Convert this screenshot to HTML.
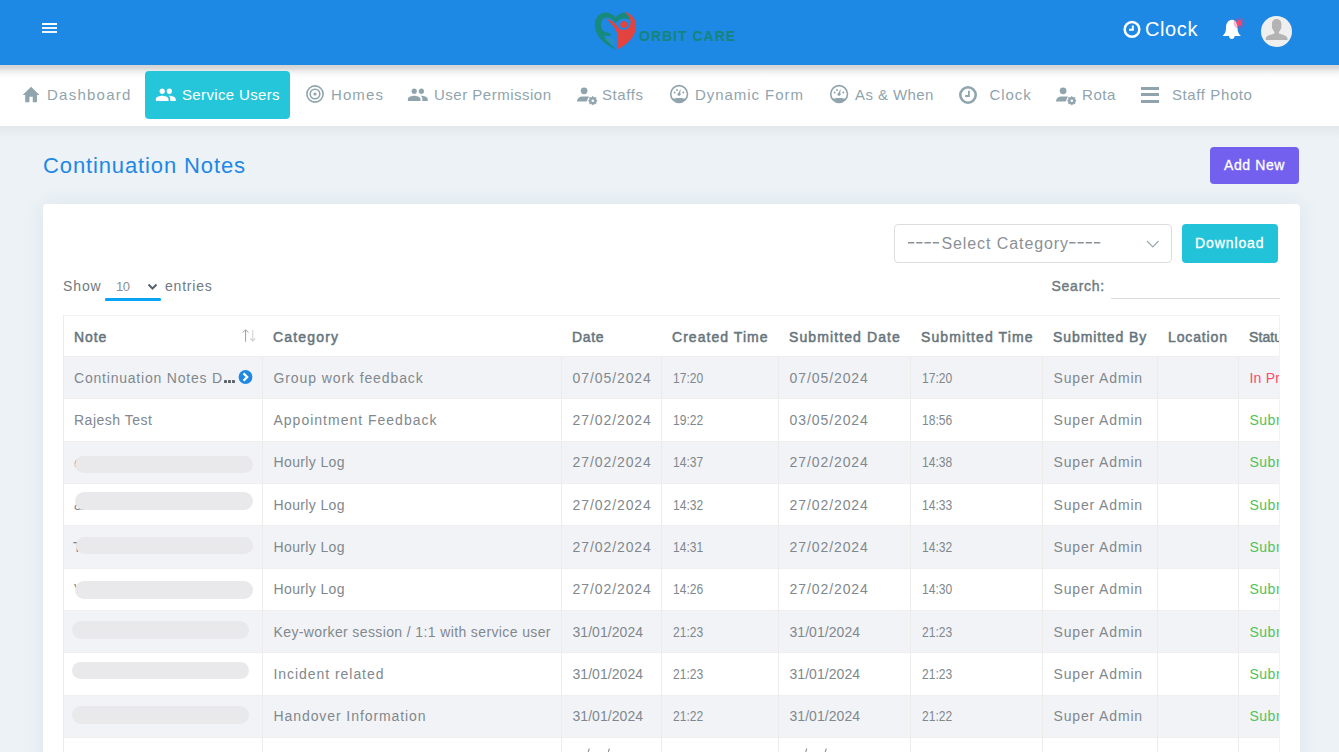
<!DOCTYPE html>
<html><head><meta charset="utf-8">
<style>
*{box-sizing:border-box;margin:0;padding:0}
html,body{width:1339px;height:752px;overflow:hidden}
body{font-family:"Liberation Sans",sans-serif;background:#ecf2f6;position:relative;color:#7d868c}
.abs{position:absolute}
#hdr{position:absolute;left:0;top:0;width:1339px;height:65px;background:#1e88e5;z-index:3}
#nav{position:absolute;left:0;top:65px;width:1339px;height:61px;background:#fff;z-index:2}
#navshadow{position:absolute;left:0;top:65px;width:1339px;height:10px;background:linear-gradient(#d9d9d9,rgba(255,255,255,0));z-index:2}
#bgshadow{position:absolute;left:0;top:126px;width:1339px;height:12px;background:linear-gradient(#e2e7eb,#ecf2f6);}
.nt{position:absolute;top:20px;font-size:15px;line-height:20px;color:#90a4ae;white-space:nowrap}
.ni{position:absolute}
#title{position:absolute;left:43px;top:152px;font-size:22px;line-height:28px;color:#1e88e5;letter-spacing:0.88px;white-space:nowrap}
#addnew{position:absolute;left:1210px;top:147px;width:89px;height:37px;background:#7460ee;border-radius:4px;color:#fff;font-size:14px;line-height:37px;letter-spacing:0.6px;-webkit-text-stroke:0.3px #fff;padding-left:14px;white-space:nowrap}
#sel{position:absolute;left:851px;top:20px;width:278px;height:39px;border:1px solid #dadde0;border-radius:4px;color:#8a9197;font-size:16px;line-height:37px;padding-left:12px;white-space:nowrap}
#dl{position:absolute;left:1139px;top:20px;width:96px;height:39px;background:#22c3d8;border-radius:4px;color:#fff;font-size:14px;font-weight:400;-webkit-text-stroke:0.3px #fff;line-height:39px;padding-left:13px;letter-spacing:0.9px;white-space:nowrap}
.lbl{position:absolute;font-size:14px;line-height:18px;color:#6f7a80;white-space:nowrap}
#tw{position:absolute;left:20px;top:111px;width:1216px;height:600px;overflow:hidden}
table{border-collapse:collapse;table-layout:fixed;width:1380px}
th{height:41px;text-align:left;font-weight:400;-webkit-text-stroke:0.5px #67757c;font-size:14px;color:#67757c;padding:1px 0 0 11px;border-top:1px solid #f2f2f2;white-space:nowrap;overflow:hidden}
td{height:42.35px;font-size:14px;color:#80888e;padding:0 0 0 11px;border-left:1px solid #eeebeb;border-top:1px solid #f1eeee;white-space:nowrap;overflow:hidden;position:relative}
tr.s td{background:#f2f3f7}
.tm span{display:inline-block;transform:scaleX(0.86);transform-origin:0 50%;letter-spacing:0}
.dt{letter-spacing:0.92px}
.sa{letter-spacing:0.85px}
.pill{position:absolute;height:17.5px;border-radius:9px;background:#e9e9eb}

#card{position:absolute;left:43px;top:204px;width:1257px;height:600px;background:#fff;border-radius:4px;box-shadow:0 0 18px rgba(170,185,200,.22)}
</style></head><body>
<div id="hdr">
<div class="abs" style="left:42px;top:23px;width:15px;height:2px;background:#fff"></div>
<div class="abs" style="left:42px;top:27px;width:15px;height:2px;background:#eef6fd"></div>
<div class="abs" style="left:42px;top:31px;width:15px;height:2px;background:#eef6fd"></div>
<svg class="abs" style="left:585px;top:5px" width="60" height="50" viewBox="0 0 60 50">
 <path d="M31,44.5 C22,41 11,33 10,22 C9,13 14,7.5 20.5,7.5 C25,7.5 28.5,10 30.5,12.5 C33,9 36.5,7.5 40,7.5 C42,8 44,11 45,15 C42,13 37,12.5 33.5,15.5 L30.5,18 C28,14 24,12.5 21,12.8 C17,13.2 15.5,17 16,21 C16.5,25 19,27 22,27.5 C24,27.8 26,28.5 26,30 C24,31.5 21,31 19,30.5 C21,35 26,40 31,44.5 Z" fill="#178a7d"/>
 <path d="M20.5,34 L29,39.5 M22.5,32.5 L29.5,36.5" fill="none" stroke="#3e9a8a" stroke-width="1"/>
 <path d="M39.5,7 C46,8 51.5,14 51,22 C50.5,32 42,40 32,44.5 C33,39 33.5,33 32.5,29 C30.5,23 26,17.5 21,14.2 C26,14.5 30,17.5 33,22 C35,25 38,25.5 41,24.5 C44,23 46,20 45.5,16 C45,12 43,9 39.5,7 Z" fill="#e2433f"/>
 <circle cx="38.75" cy="19.5" r="3.5" fill="#e2433f"/>
</svg>
<div class="abs" style="left:639px;top:28px;font-size:14px;line-height:16px;font-weight:700;color:#158579;letter-spacing:1px;white-space:nowrap">ORBIT CARE</div>
<svg class="abs" style="left:1122px;top:19px" width="20" height="20" viewBox="0 0 20 20">
 <circle cx="10" cy="10.4" r="7.3" fill="none" stroke="#fff" stroke-width="2.5"/>
 <path d="M10.8,6.4 V10.8 H7" fill="none" stroke="#fff" stroke-width="2"/>
</svg>
<div class="abs" style="left:1145px;top:18px;font-size:20px;line-height:23px;color:#fff;letter-spacing:0.6px;white-space:nowrap">Clock</div>
<svg class="abs" style="left:1220px;top:14px" width="30" height="30" viewBox="0 0 30 30">
 <path d="M12,5.7 C8,6 6,9.5 6,13 C6,17 5.5,19 2.5,22 H21 C18,19 17.5,17 17.5,13 C17.5,9.5 16,6 12,5.7 Z" fill="#fff"/>
 <path d="M9,22 C9,24 10.3,25 11.8,25 C13.3,25 14.6,24 14.6,22 Z" fill="#fff"/>
 <circle cx="19.2" cy="9" r="4.6" fill="none" stroke="rgba(225,60,130,.38)" stroke-width="2"/>
 <circle cx="19.2" cy="9" r="2.9" fill="#f6456a"/>
</svg>
<div class="abs" style="left:1261px;top:16px;width:31px;height:31px;border-radius:50%;background:#efefef;overflow:hidden">
 <svg width="31" height="31" viewBox="0 0 31 31" style="display:block">
  <path d="M15.6,3 C12.5,3 10.9,5.3 10.9,8.5 C10.9,10 11.2,11 11,11.3 C10.5,11.8 11.3,12.5 11.6,13 C12.2,14.5 13,15.5 13.5,16 L13.3,17.5 C11,18.5 6.5,19 5,21.5 L4.6,24 H26.6 L26.3,21.5 C25,19 20.5,18.5 18,17.5 L17.8,16 C18.3,15.5 19.1,14.5 19.7,13 C20,12.5 20.8,11.8 20.3,11.3 C20.1,11 20.4,10 20.4,8.5 C20.4,5.3 18.8,3 15.6,3 Z" fill="#b3b3b3"/>
 </svg>
</div>
</div>
<div id="nav">
<div class="abs" style="left:0;top:0;width:1339px;height:14px;background:linear-gradient(rgba(0,0,0,.17) 0px,rgba(0,0,0,.15) 3px,rgba(0,0,0,.075) 6px,rgba(0,0,0,.027) 9px,rgba(0,0,0,.008) 12px,rgba(0,0,0,0) 14px)"></div>
<svg class="abs" style="left:20.5px;top:18.6px" width="20" height="20" viewBox="0 0 20 20"><g transform="scale(0.84,0.91)"><path d="M10 20v-6h4v6h5v-8h3L12 3 2 12h3v8z" fill="#90a4ae"/></g></svg>
<div class="nt" style="left:47px;letter-spacing:1.25px">Dashboard</div>
<div class="abs" style="left:145px;top:6px;width:145px;height:48px;background:#26c6da;border-radius:4px"></div>
<svg class="abs" style="left:155.1px;top:18.9px" width="22" height="20" viewBox="0 0 22 20"><g transform="scale(0.9)"><path d="M16 11c1.66 0 2.99-1.34 2.99-3S17.66 5 16 5c-1.66 0-3 1.34-3 3s1.34 3 3 3zm-8 0c1.66 0 2.99-1.34 2.99-3S9.66 5 8 5C6.34 5 5 6.34 5 8s1.34 3 3 3zm0 2c-2.33 0-7 1.17-7 3.5V19h14v-2.5c0-2.33-4.67-3.5-7-3.5zm8 0c-.29 0-.62.02-.97.05 1.16.84 1.97 1.97 1.97 3.45V19h6v-2.5c0-2.33-4.67-3.5-7-3.5z" fill="#fff"/></g></svg>
<div class="nt" style="left:182px;color:#fff;letter-spacing:0.35px">Service Users</div>
<svg class="abs" style="left:304.7px;top:19.3px" width="20" height="20" viewBox="0 0 20 20">
<circle cx="10" cy="10" r="8.1" fill="none" stroke="#90a4ae" stroke-width="1.6"/>
<circle cx="10" cy="10" r="4.8" fill="none" stroke="#90a4ae" stroke-width="1.6"/>
<circle cx="10" cy="10" r="1.6" fill="#90a4ae"/>
</svg>
<div class="nt" style="left:331px;letter-spacing:1.1px">Homes</div>
<svg class="abs" style="left:407.1px;top:18.9px" width="22" height="20" viewBox="0 0 22 20"><g transform="scale(0.9)"><path d="M16 11c1.66 0 2.99-1.34 2.99-3S17.66 5 16 5c-1.66 0-3 1.34-3 3s1.34 3 3 3zm-8 0c1.66 0 2.99-1.34 2.99-3S9.66 5 8 5C6.34 5 5 6.34 5 8s1.34 3 3 3zm0 2c-2.33 0-7 1.17-7 3.5V19h14v-2.5c0-2.33-4.67-3.5-7-3.5zm8 0c-.29 0-.62.02-.97.05 1.16.84 1.97 1.97 1.97 3.45V19h6v-2.5c0-2.33-4.67-3.5-7-3.5z" fill="#90a4ae"/></g></svg>
<div class="nt" style="left:434px;letter-spacing:0.5px">User Permission</div>
<svg class="abs" style="left:574.7px;top:19px" width="26" height="24" viewBox="0 0 26 24">
<circle cx="9.1" cy="6.8" r="3.4" fill="#90a4ae"/>
<path d="M2,17.6 C2,14.2 4.5,12.4 8,12.4 H14 L11.6,17.6 Z" fill="#90a4ae"/>
<path d="M22.20,16.70 L20.76,17.92 L20.91,19.81 L19.02,19.66 L17.80,21.10 L16.58,19.66 L14.69,19.81 L14.84,17.92 L13.40,16.70 L14.84,15.48 L14.69,13.59 L16.58,13.74 L17.80,12.30 L19.02,13.74 L20.91,13.59 L20.76,15.48Z" fill="#90a4ae" stroke="#90a4ae" stroke-width="0.8" stroke-linejoin="round"/><circle cx="17.8" cy="16.7" r="1.3" fill="#fff"/>
</svg>
<div class="nt" style="left:602px;letter-spacing:0.6px">Staffs</div>
<svg class="abs" style="left:668.3px;top:18.3px" width="22" height="22" viewBox="0 0 22 22">
<circle cx="11.1" cy="11" r="8.4" fill="none" stroke="#90a4ae" stroke-width="1.6"/>
<path d="M4.6,16 C6.3,15.2 8.6,14.9 11.1,14.9 C13.6,14.9 15.9,15.2 17.6,16 A8.4,8.4 0 0 1 4.6,16 Z" fill="#90a4ae"/>
<path d="M10,11.2 L12.6,5.6 L12.2,11.6 A1.2,1.2 0 0 1 10,11.2Z" fill="#90a4ae"/>
<circle cx="11" cy="11.3" r="1.5" fill="#90a4ae"/>
<circle cx="6.6" cy="9.6" r="1" fill="#90a4ae"/>
<circle cx="9" cy="6.9" r="1" fill="#90a4ae"/>
<circle cx="15.3" cy="9.5" r="1" fill="#90a4ae"/>
</svg>
<div class="nt" style="left:695px;letter-spacing:0.95px">Dynamic Form</div>
<svg class="abs" style="left:828.1px;top:18.3px" width="22" height="22" viewBox="0 0 22 22">
<circle cx="11.1" cy="11" r="8.4" fill="none" stroke="#90a4ae" stroke-width="1.6"/>
<path d="M4.6,16 C6.3,15.2 8.6,14.9 11.1,14.9 C13.6,14.9 15.9,15.2 17.6,16 A8.4,8.4 0 0 1 4.6,16 Z" fill="#90a4ae"/>
<path d="M10,11.2 L12.6,5.6 L12.2,11.6 A1.2,1.2 0 0 1 10,11.2Z" fill="#90a4ae"/>
<circle cx="11" cy="11.3" r="1.5" fill="#90a4ae"/>
<circle cx="6.6" cy="9.6" r="1" fill="#90a4ae"/>
<circle cx="9" cy="6.9" r="1" fill="#90a4ae"/>
<circle cx="15.3" cy="9.5" r="1" fill="#90a4ae"/>
</svg>
<div class="nt" style="left:855px;letter-spacing:0.41px">As &amp; When</div>
<svg class="abs" style="left:957px;top:18.6px" width="22" height="22" viewBox="0 0 22 22">
<circle cx="11" cy="11" r="7.7" fill="none" stroke="#90a4ae" stroke-width="2.6"/>
<path d="M11.9,6.8 V12 H8.2" fill="none" stroke="#90a4ae" stroke-width="1.8"/>
</svg>
<div class="nt" style="left:989.5px;letter-spacing:0.95px">Clock</div>
<svg class="abs" style="left:1053.9px;top:19px" width="26" height="24" viewBox="0 0 26 24">
<circle cx="9.1" cy="6.8" r="3.4" fill="#90a4ae"/>
<path d="M2,17.6 C2,14.2 4.5,12.4 8,12.4 H14 L11.6,17.6 Z" fill="#90a4ae"/>
<path d="M22.20,16.70 L20.76,17.92 L20.91,19.81 L19.02,19.66 L17.80,21.10 L16.58,19.66 L14.69,19.81 L14.84,17.92 L13.40,16.70 L14.84,15.48 L14.69,13.59 L16.58,13.74 L17.80,12.30 L19.02,13.74 L20.91,13.59 L20.76,15.48Z" fill="#90a4ae" stroke="#90a4ae" stroke-width="0.8" stroke-linejoin="round"/><circle cx="17.8" cy="16.7" r="1.3" fill="#fff"/>
</svg>
<div class="nt" style="left:1082px;letter-spacing:0.57px">Rota</div>
<div class="abs" style="left:1141px;top:22.3px;width:18px;height:3px;background:#90a4ae"></div>
<div class="abs" style="left:1141px;top:28.3px;width:18px;height:3px;background:#90a4ae"></div>
<div class="abs" style="left:1141px;top:34.6px;width:18px;height:3px;background:#90a4ae"></div>
<div class="nt" style="left:1172px;letter-spacing:0.6px">Staff Photo</div>
</div>
<div id="bgshadow"></div>
<div id="title">Continuation Notes</div>
<div id="addnew">Add New</div>
<div id="card">
<div id="sel"><span class="abs" style="left:46.4px;top:0;letter-spacing:0.92px">Select Category</span>
<svg class="abs" style="left:13.4px;top:17.2px" width="200" height="2" viewBox="0 0 200 2" fill="#8a9196"><rect x="0.00" y="0" width="6.3" height="1.5"/><rect x="8.25" y="0" width="6.3" height="1.5"/><rect x="16.50" y="0" width="6.3" height="1.5"/><rect x="24.75" y="0" width="6.3" height="1.5"/><rect x="161.20" y="0" width="6.3" height="1.5"/><rect x="169.45" y="0" width="6.3" height="1.5"/><rect x="177.70" y="0" width="6.3" height="1.5"/><rect x="185.95" y="0" width="6.3" height="1.5"/></svg>
<svg class="abs" style="left:251px;top:15px" width="14" height="9" viewBox="0 0 14 9"><path d="M1,1 L6.8,7 L12.6,1" fill="none" stroke="#9aa6ad" stroke-width="1.1"/></svg></div>
<div id="dl">Download</div>
<div class="lbl" style="left:20px;top:73px;letter-spacing:0.9px">Show</div>
<div class="abs" style="left:73px;top:75.5px;font-size:13px;line-height:14px;color:#8a9197;letter-spacing:-0.4px">10</div>
<svg class="abs" style="left:104px;top:79px" width="12" height="9" viewBox="0 0 12 9"><path d="M1.5,1.5 L5.5,5.5 L9.5,1.5" fill="none" stroke="#56626a" stroke-width="2"/></svg>
<div class="abs" style="left:62px;top:94px;width:56px;height:2.6px;border-radius:1.3px;background:#09a3f6"></div>
<div class="lbl" style="left:122px;top:73px;letter-spacing:0.8px">entries</div>
<div class="lbl" style="left:1008.5px;top:73px;-webkit-text-stroke:0.4px #6f7a80;letter-spacing:0.75px">Search:</div>
<div class="abs" style="left:1068px;top:94px;width:169px;height:1px;background:#dcdcdc"></div>
<div class="abs" style="left:1236px;top:111px;width:1px;height:600px;background:#f3f1f1"></div><div id="tw"><div class="abs" style="left:0;top:0;width:1px;height:600px;background:#eeebeb;z-index:2"></div>
<table>
<colgroup><col style="width:199px"><col style="width:299px"><col style="width:100px"><col style="width:117px"><col style="width:132px"><col style="width:132px"><col style="width:115px"><col style="width:81px"><col style="width:205px"></colgroup>
<tr><th style="letter-spacing:0.93px">Note</th><th style="letter-spacing:1.18px">Category</th><th style="letter-spacing:0.67px">Date</th><th style="letter-spacing:1.05px">Created Time</th><th style="letter-spacing:1.1px">Submitted Date</th><th style="letter-spacing:1.09px">Submitted Time</th><th style="letter-spacing:0.91px">Submitted By</th><th style="letter-spacing:0.86px">Location</th><th style="letter-spacing:0.1px">Status</th></tr>
<tr class="s"><td style="border-left:0"><span style="letter-spacing:0.79px">Continuation Notes D</span></td><td><span style="letter-spacing:0.9px">Group work feedback</span></td><td class="dt">07/05/2024</td><td class="tm"><span>17:20</span></td><td class="dt">07/05/2024</td><td class="tm"><span>17:20</span></td><td class="sa">Super Admin</td><td></td><td><span style="color:#fc4b6c;letter-spacing:0.2px">In Progress</span></td></tr>
<tr><td style="border-left:0"><span style="letter-spacing:0.49px">Rajesh Test</span></td><td><span style="letter-spacing:1.0px">Appointment Feedback</span></td><td class="dt">27/02/2024</td><td class="tm"><span>19:22</span></td><td class="dt">03/05/2024</td><td class="tm"><span>18:56</span></td><td class="sa">Super Admin</td><td></td><td><span style="color:#4fc35b;letter-spacing:0.5px">Submitted</span></td></tr>
<tr class="s"><td style="border-left:0"></td><td><span style="letter-spacing:0.37px">Hourly Log</span></td><td class="dt">27/02/2024</td><td class="tm"><span>14:37</span></td><td class="dt">27/02/2024</td><td class="tm"><span>14:38</span></td><td class="sa">Super Admin</td><td></td><td><span style="color:#4fc35b;letter-spacing:0.5px">Submitted</span></td></tr>
<tr><td style="border-left:0"></td><td><span style="letter-spacing:0.37px">Hourly Log</span></td><td class="dt">27/02/2024</td><td class="tm"><span>14:32</span></td><td class="dt">27/02/2024</td><td class="tm"><span>14:33</span></td><td class="sa">Super Admin</td><td></td><td><span style="color:#4fc35b;letter-spacing:0.5px">Submitted</span></td></tr>
<tr class="s"><td style="border-left:0"></td><td><span style="letter-spacing:0.37px">Hourly Log</span></td><td class="dt">27/02/2024</td><td class="tm"><span>14:31</span></td><td class="dt">27/02/2024</td><td class="tm"><span>14:32</span></td><td class="sa">Super Admin</td><td></td><td><span style="color:#4fc35b;letter-spacing:0.5px">Submitted</span></td></tr>
<tr><td style="border-left:0"></td><td><span style="letter-spacing:0.37px">Hourly Log</span></td><td class="dt">27/02/2024</td><td class="tm"><span>14:26</span></td><td class="dt">27/02/2024</td><td class="tm"><span>14:30</span></td><td class="sa">Super Admin</td><td></td><td><span style="color:#4fc35b;letter-spacing:0.5px">Submitted</span></td></tr>
<tr class="s"><td style="border-left:0"></td><td><span style="letter-spacing:0.38px">Key-worker session / 1:1 with service user</span></td><td class="dt" style="letter-spacing:0.05px">31/01/2024</td><td class="tm"><span>21:23</span></td><td class="dt" style="letter-spacing:0.05px">31/01/2024</td><td class="tm"><span>21:23</span></td><td class="sa">Super Admin</td><td></td><td><span style="color:#4fc35b;letter-spacing:0.5px">Submitted</span></td></tr>
<tr><td style="border-left:0"></td><td><span style="letter-spacing:0.95px">Incident related</span></td><td class="dt" style="letter-spacing:0.05px">31/01/2024</td><td class="tm"><span>21:23</span></td><td class="dt" style="letter-spacing:0.05px">31/01/2024</td><td class="tm"><span>21:23</span></td><td class="sa">Super Admin</td><td></td><td><span style="color:#4fc35b;letter-spacing:0.5px">Submitted</span></td></tr>
<tr class="s"><td style="border-left:0"></td><td><span style="letter-spacing:0.92px">Handover Information</span></td><td class="dt" style="letter-spacing:0.05px">31/01/2024</td><td class="tm"><span>21:22</span></td><td class="dt" style="letter-spacing:0.05px">31/01/2024</td><td class="tm"><span>21:22</span></td><td class="sa">Super Admin</td><td></td><td><span style="color:#4fc35b;letter-spacing:0.5px">Submitted</span></td></tr>
<tr><td style="border-left:0"></td><td><span style="letter-spacing:0.92px">Handover Information</span></td><td class="dt" style="letter-spacing:0.05px">31/01/2024</td><td class="tm"><span>21:20</span></td><td class="dt" style="letter-spacing:0.05px">31/01/2024</td><td class="tm"><span>21:20</span></td><td class="sa">Super Admin</td><td></td><td><span style="color:#4fc35b;letter-spacing:0.5px">Submitted</span></td></tr>
</table></div>
</div>

<svg class="abs" style="left:238px;top:326px" width="20" height="20" viewBox="0 0 20 20">
<path d="M7.6,3.8 V15.8 M4.8,6.6 L7.6,3.8 L10.4,6.6" fill="none" stroke="#9ba1a6" stroke-width="1"/>
<path d="M14.8,4 V15 M12.3,12.5 L14.8,15 L17.3,12.5" fill="none" stroke="#cfd3d6" stroke-width="1.1"/>
</svg>
<div class="abs" style="left:224.2px;top:379.8px;width:2.8px;height:2.8px;border-radius:0.6px;background:#5f676c"></div>
<div class="abs" style="left:228.2px;top:379.8px;width:2.8px;height:2.8px;border-radius:0.6px;background:#5f676c"></div>
<div class="abs" style="left:232.2px;top:379.8px;width:2.8px;height:2.8px;border-radius:0.6px;background:#5f676c"></div>
<svg class="abs" style="left:237px;top:369px" width="17" height="17" viewBox="0 0 17 17">
<circle cx="8.5" cy="8" r="6.9" fill="#1e88e5"/>
<path d="M6.5,4.4 L10.2,8 L6.5,11.8" fill="none" stroke="#fff" stroke-width="2.3"/>
</svg>
<div class="abs" style="left:74px;top:455px;font-size:14px;line-height:18px;color:#7d868c">C</div>
<div class="abs" style="left:74px;top:496px;font-size:14px;line-height:18px;color:#7d868c">&amp;</div>
<div class="abs" style="left:73px;top:538px;font-size:14px;line-height:18px;color:#7d868c">T</div>
<div class="abs" style="left:74px;top:580px;font-size:14px;line-height:18px;color:#7d868c">V</div>
<div class="pill" style="left:75px;top:455.7px;width:178px"></div>
<div class="pill" style="left:75px;top:492px;width:178px"></div>
<div class="pill" style="left:75.5px;top:536.7px;width:177px"></div>
<div class="pill" style="left:75px;top:581px;width:178px"></div>
<div class="pill" style="left:71.5px;top:621.3px;width:177.5px"></div>
<div class="pill" style="left:71.5px;top:661.7px;width:177.5px"></div>
<div class="pill" style="left:71.5px;top:706px;width:177.5px"></div>
<svg class="abs" style="left:570px;top:745px" width="270" height="7" viewBox="0 0 270 7"><path d="M19.3,3.5 L18.2,7 M39.4,3.5 L38.3,7 M236.8,3.5 L235.7,7 M256.3,3.5 L255.2,7" stroke="#8a9197" stroke-width="1.1"/></svg>
</body></html>
